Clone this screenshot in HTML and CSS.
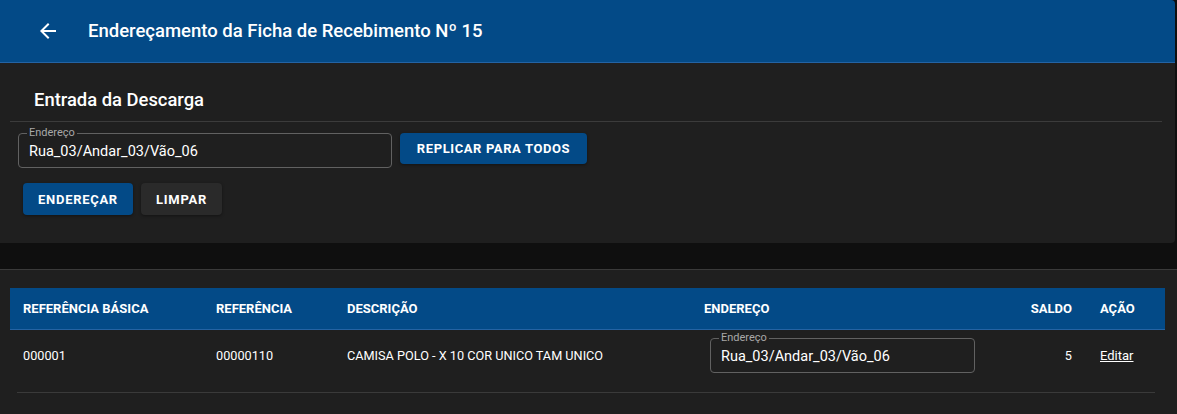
FILE: index.html
```html
<!DOCTYPE html>
<html lang="pt-BR">
<head>
    <meta charset="UTF-8">
    <meta name="viewport" content="width=device-width, initial-scale=1.0">
    <title>Endereçamento da Ficha de Recebimento</title>
    <link rel="stylesheet" href="styles.css">
</head>
<body>
    <div class="top">
        <header class="topbar">
            <button class="back-btn" aria-label="Voltar">
                <svg width="24" height="24" viewBox="0 0 24 24"><path d="M20 11H7.83l5.59-5.59L12 4l-8 8 8 8 1.41-1.41L7.83 13H20v-2z" fill="#fff"/></svg>
            </button>
            <h1>Endereçamento da Ficha de Recebimento Nº 15</h1>
        </header>

        <section class="card">
            <h2>Entrada da Descarga</h2>
            <div class="divider"></div>

            <div class="form-row">
                <div class="field field-main">
                    <label>Endereço</label>
                    <input type="text" value="Rua_03/Andar_03/Vão_06">
                </div>
                <button class="btn btn-primary btn-replicar">Replicar para todos</button>
            </div>

            <div class="actions">
                <button class="btn btn-primary">Endereçar</button>
                <button class="btn btn-dark">Limpar</button>
            </div>
        </section>
    </div>

    <section class="list">
        <div class="thead">
            <div>Referência Básica</div>
            <div>Referência</div>
            <div>Descrição</div>
            <div>Endereço</div>
            <div class="num">Saldo</div>
            <div>Ação</div>
        </div>
        <div class="trow">
            <div>000001</div>
            <div>00000110</div>
            <div>CAMISA POLO - X 10 COR UNICO TAM UNICO</div>
            <div>
                <div class="field field-row">
                    <label>Endereço</label>
                    <input type="text" value="Rua_03/Andar_03/Vão_06">
                </div>
            </div>
            <div class="num">5</div>
            <div><a href="#">Editar</a></div>
        </div>
        <div class="row-line"></div>
    </section>
</body>
</html>
```

FILE: styles.css
```css
* {
    margin: 0;
    padding: 0;
    box-sizing: border-box;
    font-family: Roboto, "Liberation Sans", sans-serif;
}

body {
    background-color: #0f0f0f;
    color: #fff;
    width: 1177px;
}

.top {
    width: 1175px;
}

.topbar {
    display: flex;
    align-items: center;
    height: 63px;
    padding: 0 0 1px 36px;
    background-color: #034a87;
    border-bottom: 1px solid #2463a3;
    border-top-right-radius: 4px;
}

.back-btn {
    display: flex;
    background: none;
    border: none;
    margin-right: 28px;
}

.topbar h1 {
    font-size: 18.5px;
    font-weight: 500;
}

.card {
    background-color: #1f1f1f;
    padding: 25px 13px 28px 10px;
    border-bottom-right-radius: 4px;
}

.card h2 {
    font-size: 18.4px;
    font-weight: 500;
    line-height: 24px;
    padding-left: 24px;
}

.divider {
    height: 1px;
    background-color: #3b3b3b;
    margin-top: 9px;
}

.form-row {
    display: flex;
    align-items: flex-start;
    gap: 8px;
    margin-top: 11px;
    padding-left: 8px;
}

.field {
    position: relative;
    border: 1px solid #616161;
    border-radius: 4px;
    height: 35px;
}

.field label {
    position: absolute;
    top: -7px;
    left: 8px;
    padding: 0 2px;
    background-color: #1f1f1f;
    color: #a8a8a8;
    font-size: 11px;
    line-height: 12px;
}

.field input {
    width: 100%;
    height: 100%;
    padding: 1px 10px 0;
    background: none;
    border: none;
    color: #fff;
    font-size: 14.5px;
    outline: none;
}

.field-main {
    width: 374px;
}

.btn {
    height: 32px;
    padding: 0;
    border: none;
    border-radius: 4px;
    color: #fff;
    font-size: 13px;
    font-weight: 700;
    letter-spacing: 0.7px;
    text-transform: uppercase;
    white-space: nowrap;
    box-shadow: 0 1px 3px rgba(0, 0, 0, 0.4);
}

.btn-primary {
    background-color: #034a87;
}

.btn-dark {
    background-color: #2a2a2a;
}

.btn-replicar {
    width: 187px;
    height: 31px;
    letter-spacing: 0.6px;
}

.actions {
    display: flex;
    gap: 8px;
    margin-top: 15px;
    padding-left: 13px;
}

.actions .btn-primary {
    width: 110px;
}

.actions .btn-dark {
    width: 81px;
}

.list {
    margin-top: 26px;
    border-top: 1px solid #3a3a3a;
    background-color: #1f1f1f;
    padding: 18px 12px 30px 10px;
    min-height: 144px;
}

.thead,
.trow {
    display: grid;
    grid-template-columns: 193px 131px 357px 299px 97px 1fr;
    align-items: center;
}

.thead > div,
.trow > div {
    padding: 0 13px;
}

.thead > .num,
.trow > .num {
    padding-right: 15px;
}

.thead {
    height: 42px;
    background-color: #034a87;
    border-bottom: 1px solid #2463a3;
    font-size: 13px;
    font-weight: 700;
    text-transform: uppercase;
}

.trow {
    height: 51px;
    font-size: 12.7px;
}

.num {
    text-align: right;
}

.field-row {
    width: 265px;
    margin-left: 6px;
}

.trow a {
    color: #fff;
    font-size: 13px;
}

.row-line {
    height: 1px;
    background-color: #3a3a3a;
    margin: 11px 10px 0 7px;
}
```
